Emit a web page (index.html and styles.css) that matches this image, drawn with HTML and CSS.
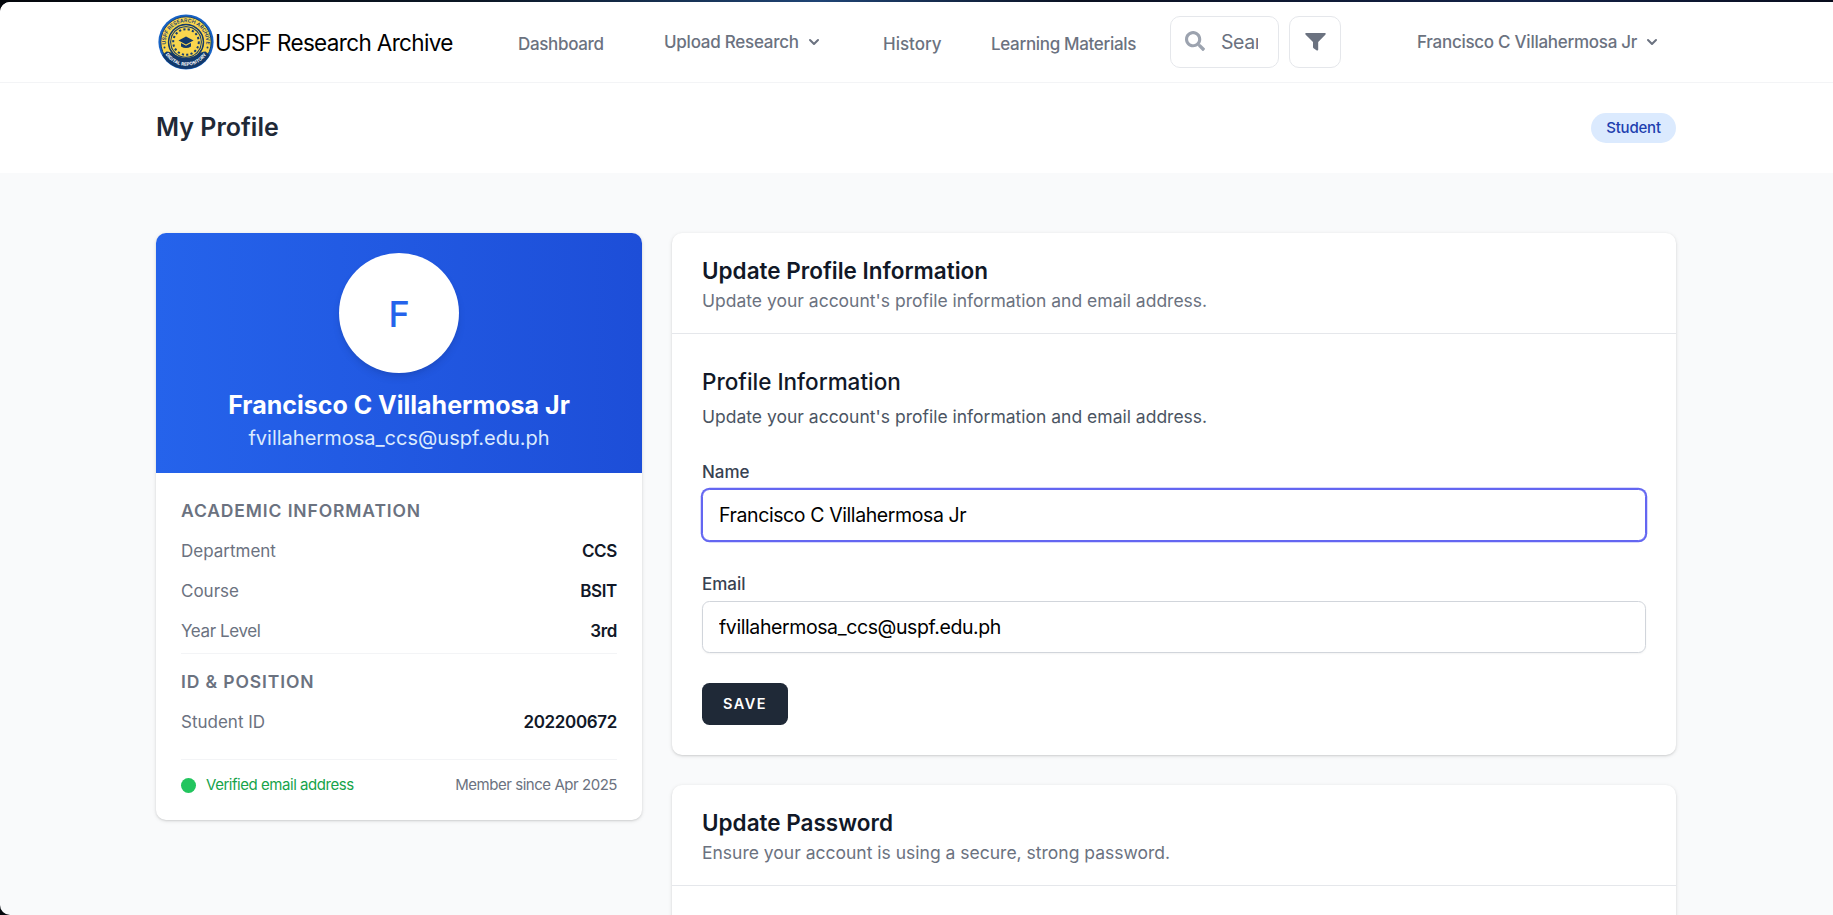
FILE: index.html
```html
<!DOCTYPE html>
<html lang="en">
<head>
<meta charset="utf-8">
<title>My Profile - USPF Research Archive</title>
<link rel="stylesheet" href="styles.css">
</head>
<body>
<div class="page">
  <nav class="nav">
    <a class="brand">
      <svg class="logo" viewBox="0 0 56 56">
        <defs>
          <path id="arcTop" d="M9.500 36.500 A20.200 20.200 0 1 1 46.500 36.500"/>
          <path id="arcBottom" d="M8 41 A24 24 0 0 0 48 41"/>
        </defs>
        <circle cx="28" cy="28" r="27.600" fill="#1763c6"/>
        <circle cx="28" cy="28" r="25.200" fill="#f9d64e" stroke="#173f70" stroke-width="1"/>
        <circle cx="28" cy="28" r="18.200" fill="#12396b"/>
        <circle cx="28" cy="28" r="16.400" fill="none" stroke="#f9d64e" stroke-width=".9"/>
        <circle cx="28" cy="28" r="14.800" fill="#f9d64e"/>
        <circle cx="28" cy="28" r="12.800" fill="none" stroke="#173f70" stroke-width="2" stroke-dasharray="2.200 2.200"/>
        <path d="M20.500 26.500 L28 22.500 L35.500 26.500 L28 30.500 Z M23 29 L28 31.700 L33 29 V32.500 Q28 35.500 23 32.500 Z" fill="#12396b"/>
        <path d="M8.500 37.500 Q13 37.500 17 41 Q28 47 39 41 Q43 37.500 47.500 37.500 L51.800 41 A27.200 27.200 0 0 1 4.200 41 Z" fill="#12396b"/>
        <text class="seal-top"><textPath href="#arcTop" startOffset="50%" text-anchor="middle">USPF RESEARCH ARCHIVE</textPath></text>
        <text class="seal-bottom"><textPath href="#arcBottom" startOffset="50%" text-anchor="middle">DIGITAL REPOSITORY</textPath></text>
        <circle cx="6.500" cy="33.500" r="1" fill="#173f70"/><circle cx="49.500" cy="33.500" r="1" fill="#173f70"/>
      </svg>
      <span class="brand-name">USPF Research Archive</span>
    </a>
    <a class="link link-dash">Dashboard</a>
    <a class="link link-upload raised">Upload Research
      <svg class="chev" viewBox="0 0 20 20"><path d="M5.293 7.293a1 1 0 011.414 0L10 10.586l3.293-3.293a1 1 0 111.414 1.414l-4 4a1 1 0 01-1.414 0l-4-4a1 1 0 010-1.414z"/></svg></a>
    <a class="link link-history">History</a>
    <a class="link link-learn">Learning Materials</a>
    <div class="search">
      <svg viewBox="0 0 512 512"><path d="M505 442.700L405.300 343c-4.500-4.500-10.600-7-17-7H372c27.600-35.300 44-79.700 44-128C416 93.100 322.900 0 208 0S0 93.100 0 208s93.100 208 208 208c48.300 0 92.700-16.400 128-44v16.300c0 6.400 2.500 12.500 7 17l99.700 99.700c9.400 9.400 24.600 9.400 33.900 0l28.300-28.300c9.400-9.400 9.400-24.600.1-34zM208 336c-70.700 0-128-57.200-128-128 0-70.700 57.200-128 128-128 70.700 0 128 57.200 128 128 0 70.700-57.200 128-128 128z"/></svg>
      <input type="text" placeholder="Search">
    </div>
    <button class="filter"><svg viewBox="0 0 21 18"><path d="M1 0 H20 Q21.300 .4 20.300 1.700 L13.200 9 V16.800 Q13 18 11.800 17.400 L8.600 15.200 Q8 14.700 8 14 V9 L.7 1.700 Q-.3 .4 1 0 Z"/></svg></button>
    <a class="link link-user raised">Francisco C Villahermosa Jr
      <svg class="chev" viewBox="0 0 20 20"><path d="M5.293 7.293a1 1 0 011.414 0L10 10.586l3.293-3.293a1 1 0 111.414 1.414l-4 4a1 1 0 01-1.414 0l-4-4a1 1 0 010-1.414z"/></svg></a>
  </nav>
  <header class="title-bar">
    <h1>My Profile</h1>
    <span class="badge">Student</span>
  </header>
  <main class="content">
    <aside class="card profile">
      <div class="hero">
        <div class="avatar">F</div>
        <h2>Francisco C Villahermosa Jr</h2>
        <p>fvillahermosa_ccs@uspf.edu.ph</p>
      </div>
      <div class="details">
        <h3>ACADEMIC INFORMATION</h3>
        <div class="row"><span>Department</span><b>CCS</b></div>
        <div class="row"><span>Course</span><b>BSIT</b></div>
        <div class="row"><span class="tight">Year Level</span><b>3rd</b></div>
        <h3 class="second">ID &amp; POSITION</h3>
        <div class="row"><span>Student ID</span><b>202200672</b></div>
        <div class="foot"><i class="dot"></i><span class="verified">Verified email address</span><span class="member">Member since Apr 2025</span></div>
      </div>
    </aside>
    <div class="panels">
      <section class="card">
        <div class="card-head"><h2>Update Profile Information</h2><p>Update your account's profile information and email address.</p></div>
        <form class="form">
          <h3>Profile Information</h3>
          <p>Update your account's profile information and email address.</p>
          <label for="name">Name</label>
          <input id="name" class="field focused" type="text" value="Francisco C Villahermosa Jr">
          <label for="email">Email</label>
          <input id="email" class="field" type="text" value="fvillahermosa_ccs@uspf.edu.ph">
          <button type="button" class="save">SAVE</button>
        </form>
      </section>
      <section class="card">
        <div class="card-head"><h2>Update Password</h2><p>Ensure your account is using a secure, strong password.</p></div>
        <div class="form"></div>
      </section>
    </div>
  </main>
</div>
</body>
</html>
```
FILE: styles.css
```css
* { box-sizing: border-box; margin: 0; padding: 0; }
html { height: 100%; overflow: hidden; }
body {
  height: 915px;
  overflow: hidden;
  padding-top: 2px;
  font-family: Inter, "Liberation Sans", sans-serif;
  background: linear-gradient(90deg, #04070c 0, #0b1725 480px, #1f4475 820px, #0a1020 1080px, #132349 1530px, #080c1c 1833px);
}
.page {
  height: 913px;
  overflow: hidden;
  background: #f9fafb;
  border-radius: 10px 0 0 10px;
}
.nav {
  display: flex;
  align-items: center;
  height: 81px;
  padding: 0 157px 1px 158px;
  background: #fff;
  border-bottom: 1px solid #f3f4f6;
}
.brand { display: flex; align-items: center; width: 360px; color: #000; }
.logo { width: 56px; height: 56px; margin-right: 1px; }
.seal-top { font-size: 5.200px; font-weight: 600; fill: #173f70; }
.seal-bottom { font-size: 4.600px; font-weight: 700; fill: #fff; }
.brand-name { padding-top: 1px; font-size: 22.500px; letter-spacing: -.65px; white-space: nowrap; }
.link {
  display: flex;
  align-items: center;
  padding-top: 5px;
  font-size: 17px;
  color: #6b7280;
  font-weight: 450;
  letter-spacing: -.33px;
  white-space: nowrap;
}
.raised { padding-top: 0; }
.link-dash { width: 146px; }
.link-upload { width: 219px; letter-spacing: -.25px; }
.link-history { width: 108px; letter-spacing: 0; }
.link-learn { width: 179px; }
.link-user { margin-left: 76px; letter-spacing: -.27px; }
.chev { width: 20px; height: 20px; margin-left: 5px; fill: #6b7280; }
.search {
  display: flex;
  align-items: center;
  width: 109px;
  height: 52px;
  padding: 0 20px 0 14px;
  border: 1px solid #e5e7eb;
  border-radius: 10px;
}
.search svg { flex: none; width: 20px; height: 20px; margin: 0 16px 2px 0; fill: #9ca3af; }
.search input {
  width: 37px;
  border: 0;
  outline: 0;
  background: none;
  font: 400 19.500px Inter, sans-serif;
  letter-spacing: -.4px;
}
.search input::placeholder { color: #6b7280; }
.filter {
  display: flex;
  align-items: center;
  justify-content: center;
  width: 52px;
  height: 52px;
  margin-left: 10px;
  background: #fff;
  border: 1px solid #e5e7eb;
  border-radius: 10px;
}
.filter svg { width: 21px; height: 18px; fill: #6b7280; }
.title-bar {
  display: flex;
  align-items: center;
  justify-content: space-between;
  height: 90px;
  padding: 0 157px 0 156px;
  background: #fff;
}
.title-bar h1 { font-size: 25px; font-weight: 600; line-height: 32px; padding-bottom: 2px; color: #1f2937; }
.badge {
  width: 85px;
  height: 30px;
  line-height: 30px;
  text-align: center;
  border-radius: 15px;
  background: #dbeafe;
  color: #1e40af;
  font-size: 15px;
  font-weight: 500;
  letter-spacing: -.2px;
}
.content { display: flex; align-items: flex-start; gap: 30px; padding: 60px 157px 0 156px; }
.card {
  background: #fff;
  border-radius: 10px;
  overflow: hidden;
  box-shadow: 0 1px 4px rgba(0, 0, 0, .1), 0 1px 2px rgba(0, 0, 0, .1);
}
.profile { width: 486px; flex: none; }
.hero {
  display: flex;
  flex-direction: column;
  align-items: center;
  height: 240px;
  padding-top: 20px;
  color: #fff;
  background: linear-gradient(90deg, #2563eb, #1d4ed8);
}
.avatar {
  display: flex;
  align-items: center;
  justify-content: center;
  width: 120px;
  height: 120px;
  border-radius: 50%;
  background: #fff;
  box-shadow: 0 5px 8px -1px rgba(0, 0, 0, .1), 0 2px 5px -2px rgba(0, 0, 0, .1);
  color: #2563eb;
  font-size: 36px;
  font-weight: 500;
  padding-top: 2px;
}
.hero h2 { margin-top: 16px; font-size: 25px; line-height: 32px; font-weight: 700; }
.hero p { margin-top: 2px; font-size: 20px; line-height: 30px; color: #dbeafe; }
.details { height: 347px; padding: 25px 25px 0; }
.details h3 {
  margin-bottom: 7px;
  font-size: 17.500px;
  line-height: 26px;
  font-weight: 600;
  letter-spacing: .05em;
  color: #6b7280;
}
.details .second { margin-top: 2px; padding-top: 15px; border-top: 1px solid #f3f4f6; }
.row { display: flex; justify-content: space-between; height: 40px; line-height: 40px; font-size: 17px; color: #6b7280; }
.row b { font-weight: 600; letter-spacing: -.35px; color: #111827; }
.tight { letter-spacing: -.4px; }
.foot {
  display: flex;
  align-items: center;
  margin-top: 17px;
  padding-top: 12px;
  border-top: 1px solid #f3f4f6;
  font-size: 15px;
  line-height: 26px;
  letter-spacing: -.46px;
  color: #6b7280;
}
.dot { width: 15px; height: 15px; margin-right: 10px; border-radius: 50%; background: #22c55e; }
.verified { color: #16a34a; }
.member { margin-left: auto; }
.panels { flex: 1; display: flex; flex-direction: column; gap: 30px; }
.card-head { height: 101px; padding: 25px 30px 0; border-bottom: 1px solid #e5e7eb; }
.card-head h2 { font-size: 22.500px; line-height: 26px; font-weight: 600; color: #111827; }
.card-head p { margin-top: 4px; font-size: 17.500px; line-height: 25px; color: #6b7280; }
.form { padding: 30px; min-height: 60px; }
.form h3 { font-size: 22.500px; line-height: 35px; font-weight: 500; color: #111827; }
.form p { margin-top: 5px; font-size: 17.500px; line-height: 25px; color: #4b5563; }
.form label { display: block; margin: 31px 0 4px; font-size: 17px; line-height: 25px; font-weight: 450; color: #374151; }
.field {
  display: block;
  width: 100%;
  height: 52px;
  padding-left: 16px;
  border: 1px solid #d1d5db;
  border-radius: 7.500px;
  outline: 0;
  box-shadow: 0 1px 2px rgba(0, 0, 0, .05);
  font: 400 19.500px Inter, sans-serif;
  letter-spacing: -.4px;
  color: #000;
}
.focused { border-color: #6366f1; box-shadow: 0 0 0 1.250px #6366f1; }
.save {
  display: block;
  width: 86px;
  height: 42px;
  margin-top: 30px;
  padding-bottom: 2px;
  border: 0;
  border-radius: 7.500px;
  background: #1f2937;
  color: #fff;
  font: 600 14.500px Inter, sans-serif;
  letter-spacing: .1em;
}
```
